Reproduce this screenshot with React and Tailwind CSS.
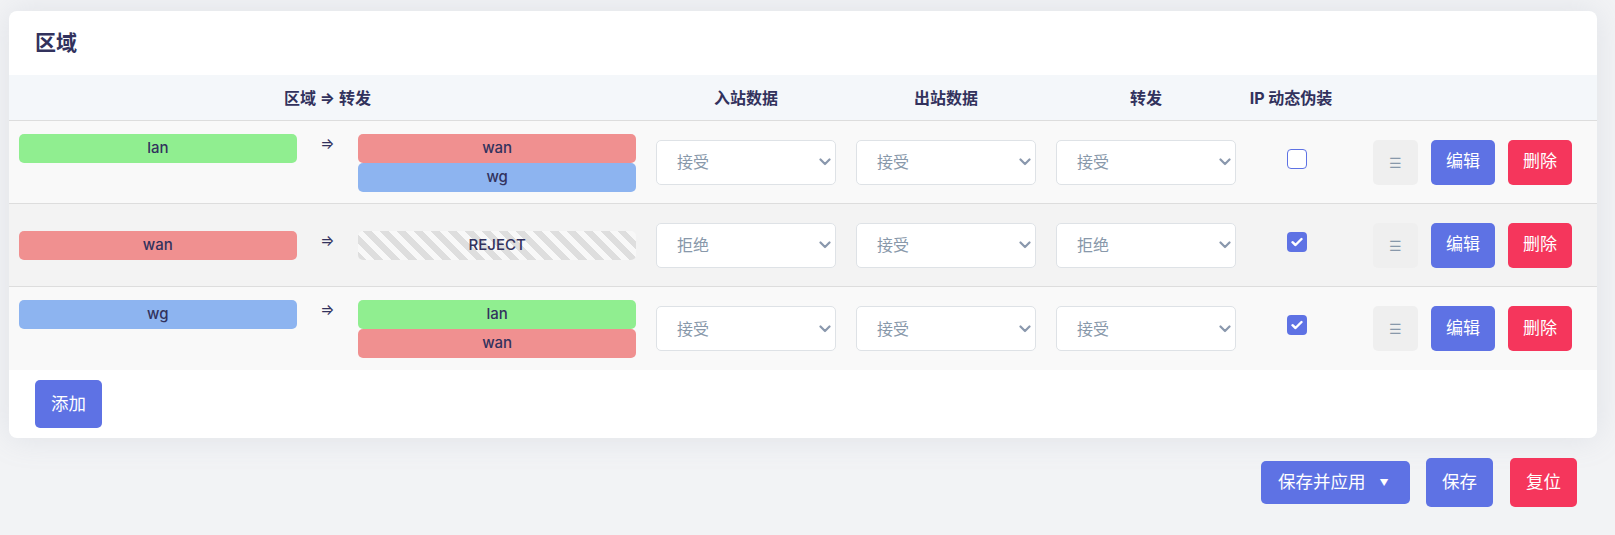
import React from 'react';

const zoneColors = {
  lan: 'bg-[#90ee90]',
  wan: 'bg-[#f09090]',
  wg: 'bg-[#8db4f0]',
};

const zonas = [
  { src: 'lan', dest: ['wan', 'wg'], entrada: '接受', salida: '接受', reenvio: '接受', masq: false, bg: 'bg-[#f9f9f9]' },
  { src: 'wan', dest: null, entrada: '拒绝', salida: '接受', reenvio: '拒绝', masq: true, bg: 'bg-[#f3f3f3]' },
  { src: 'wg', dest: ['lan', 'wan'], entrada: '接受', salida: '接受', reenvio: '接受', masq: true, bg: 'bg-[#f9f9f9]' },
];

const cols = 'grid grid-cols-[637px_200px_200px_200px_102px_249px]';

function Badge({ name }) {
  return (
    <div className={`${zoneColors[name]} h-[29px] rounded-[5px] flex items-center justify-center text-[15px] font-medium text-[#32325d]`}>
      {name}
    </div>
  );
}

function Rechazo() {
  return (
    <div className="h-[29px] rounded-[5px] flex items-center justify-center text-[15px] font-medium text-[#32325d] bg-[repeating-linear-gradient(45deg,#dedede_0px,#dedede_6px,#f8f8f8_6px,#f8f8f8_12px)]">
      REJECT
    </div>
  );
}

function Selector({ valor }) {
  return (
    <div className="h-[45px] w-full bg-white border border-[#dee2e6] rounded-[5px] flex items-center justify-between pl-[20px] pr-[4px] text-[16px] text-[#8898aa]">
      <span>{valor}</span>
      <svg width="12" height="8" viewBox="0 0 12 8" fill="none">
        <path d="M1.5 1.5 L6 6 L10.5 1.5" stroke="#8a98ad" strokeWidth="2.2" strokeLinecap="round" strokeLinejoin="round" />
      </svg>
    </div>
  );
}

function Casilla({ marcada }) {
  if (marcada) {
    return (
      <div className="w-[20px] h-[20px] rounded-[4px] bg-[#5e72e4] flex items-center justify-center mb-[7px]">
        <svg width="12" height="10" viewBox="0 0 12 10" fill="none">
          <path d="M1.5 5.2 L4.5 8 L10.5 2" stroke="white" strokeWidth="2.4" strokeLinecap="round" strokeLinejoin="round" />
        </svg>
      </div>
    );
  }
  return <div className="w-[20px] h-[20px] rounded-[4px] bg-white border border-[#5e72e4] mb-[7px]" />;
}

export default function App() {
  return (
    <div className="min-h-[535px] bg-[#f2f3f5] pt-[11px] pl-[9px] font-['Inter','Noto_Sans_CJK_SC',sans-serif]">
      <div className="w-[1588px] bg-white rounded-lg shadow-[0_0_2rem_0_rgba(136,152,170,0.18)] overflow-hidden">
        <div className="h-[64px] flex items-center pl-[26px]">
          <h2 className="text-[21px] font-bold text-[#32325d]">区域</h2>
        </div>

        <div className={`${cols} h-[46px] bg-[#f4f7fa] border-b border-[#dddddd] text-[16px] font-bold text-[#32325d]`}>
          <div className="flex items-center justify-center">区域 ⇒ 转发</div>
          <div className="flex items-center justify-center">入站数据</div>
          <div className="flex items-center justify-center">出站数据</div>
          <div className="flex items-center justify-center">转发</div>
          <div className="flex items-center justify-center pr-[12px] whitespace-nowrap">IP 动态伪装</div>
          <div />
        </div>

        {zonas.map((z, i) => (
          <div
            key={z.src}
            className={`${cols} h-[83px] ${z.bg} ${i < zonas.length - 1 ? 'border-b border-[#dddddd]' : ''}`}
          >
            <div className="flex items-center px-[10px] pt-[1px]">
              <div className="flex items-start w-full">
                <div className="basis-[45%]">
                  <Badge name={z.src} />
                </div>
                <div className="basis-[10%] text-center text-[15px] leading-[20px] text-[#32325d]">⇒</div>
                <div className="basis-[45%] flex flex-col">
                  {z.dest ? z.dest.map((d) => <Badge key={d} name={d} />) : <Rechazo />}
                </div>
              </div>
            </div>
            <div className="flex items-center px-[10px]">
              <Selector valor={z.entrada} />
            </div>
            <div className="flex items-center px-[10px]">
              <Selector valor={z.salida} />
            </div>
            <div className="flex items-center px-[10px]">
              <Selector valor={z.reenvio} />
            </div>
            <div className="flex items-center justify-center">
              <Casilla marcada={z.masq} />
            </div>
            <div className="flex items-center gap-[13px] pl-[25px]">
              <button className="w-[45px] h-[45px] rounded-[5px] bg-[#efefef] text-[#8898aa] text-[14px] flex items-center justify-center">☰</button>
              <button className="w-[64px] h-[45px] rounded-[5px] bg-[#5e72e4] text-white text-[17px]">编辑</button>
              <button className="w-[64px] h-[45px] rounded-[5px] bg-[#f5365c] text-white text-[17px]">删除</button>
            </div>
          </div>
        ))}

        <div className="pl-[26px] pt-[10px] pb-[10px]">
          <button className="w-[67px] h-[48px] rounded-[5px] bg-[#5e72e4] text-white text-[17.5px]">添加</button>
        </div>
      </div>

      <div className="w-[1568px] flex justify-end items-center mt-[20px] pb-[28px]">
        <button className="w-[149px] h-[43px] rounded-[5px] bg-[#5e72e4] text-white text-[17.5px] flex items-center pl-[17px]">
          保存并应用
          <span className="ml-[14px] text-[9px]">▼</span>
        </button>
        <button className="ml-[16px] w-[67px] h-[49px] rounded-[5px] bg-[#5e72e4] text-white text-[17.5px]">保存</button>
        <button className="ml-[17px] w-[67px] h-[49px] rounded-[5px] bg-[#f5365c] text-white text-[17.5px]">复位</button>
      </div>
    </div>
  );
}
